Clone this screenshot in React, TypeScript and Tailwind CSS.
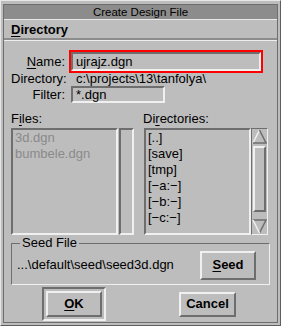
import React from 'react';

const font = { fontFamily: '"Liberation Sans", Arial, sans-serif' };

const Mn: React.FC<{ children: React.ReactNode }> = ({ children }) => (
    <span className="underline underline-offset-2 decoration-1">{children}</span>
);

const ListBox: React.FC<{ items: string[]; dim?: boolean; className?: string }> = ({ items, dim, className }) => (
    <div
        className={`border-2 border-t-[#6e6e6e] border-l-[#6e6e6e] border-r-[#f0f0f0] border-b-[#f0f0f0] pl-[2px] ${className ?? ''}`}
    >
        {items.map((it) => (
            <div key={it} className={`h-[16px] leading-[16px] text-[13px] ${dim ? 'text-[#8a8a8a]' : 'text-black'}`}>
                {it}
            </div>
        ))}
    </div>
);

const BevelButton: React.FC<{ children: React.ReactNode; className?: string }> = ({ children, className }) => (
    <button
        className={`flex items-center justify-center border-2 border-t-[#f0f0f0] border-l-[#f0f0f0] border-r-[#6e6e6e] border-b-[#6e6e6e] bg-[#bdbdbd] text-[13px] font-bold text-black ${className ?? ''}`}
    >
        {children}
    </button>
);

const Scrollbar: React.FC = () => (
    <div className="flex w-[17px] flex-col border border-t-[#6e6e6e] border-l-[#6e6e6e] border-r-[#f0f0f0] border-b-[#f0f0f0]">
        <svg width="15" height="16" viewBox="0 0 15 16" className="block">
            <path d="M1 14 L7.5 1" stroke="#f0f0f0" strokeWidth="1.5" fill="none" />
            <path d="M7.5 1 L14 14 L1 14" stroke="#6e6e6e" strokeWidth="1.5" fill="none" />
        </svg>
        <div className="mx-[1px] mt-[1px] h-[66px] border-2 border-t-[#f0f0f0] border-l-[#f0f0f0] border-r-[#6e6e6e] border-b-[#6e6e6e]" />
        <div className="flex-1" />
        <svg width="15" height="16" viewBox="0 0 15 16" className="block">
            <path d="M1 2 L14 2 L7.5 15" stroke="#6e6e6e" strokeWidth="1.5" fill="none" />
            <path d="M1 2 L7.5 15" stroke="#f0f0f0" strokeWidth="1.5" fill="none" />
        </svg>
    </div>
);

const App: React.FC = () => {
    return (
        <div
            style={font}
            className="h-[326px] w-[281px] border border-t-[#e8e8e8] border-l-[#e8e8e8] border-r-[#5e5e5e] border-b-[#5e5e5e] bg-[#bdbdbd] p-[2px] pt-[3px] text-black"
        >
            <div className="flex h-full flex-col border border-t-[#6e6e6e] border-l-[#6e6e6e] border-r-[#6e6e6e] border-b-[#6e6e6e]">
                <div className="flex h-[15px] items-center justify-center border-b border-b-[#e8e8e8] bg-[#8c8c8c] pt-[1px] text-[11.5px] leading-none">
                    Create Design File
                </div>
                <div className="flex h-[20px] items-center border-b-2 border-b-[#8c8c8c] px-[7px] pt-[2px] text-[13px] font-bold">
                    <Mn>D</Mn>irectory
                </div>
                <div className="flex flex-1 flex-col border-t border-t-[#eeeeee] px-[7px] pt-[10px] text-[13px]">
                    <div className="flex h-[21px] items-center">
                        <div className="w-[54px] text-right">
                            <Mn>N</Mn>ame:
                        </div>
                        <div className="ml-[5px] h-[21px] w-[192px] shrink-0 outline-2 outline-offset-[-1px] outline-[#ff0000]">
                            <div className="m-[1px] h-[19px] border-2 border-t-[#6e6e6e] border-l-[#6e6e6e] border-r-[#f0f0f0] border-b-[#f0f0f0] pl-[3px] leading-[15px]">
                                ujrajz.dgn
                            </div>
                        </div>
                    </div>
                    <div className="flex h-[14px] items-center">
                        <div className="w-[54px] text-right">Directory:</div>
                        <div className="ml-[11px]">c:\projects\13\tanfolya\</div>
                    </div>
                    <div className="flex h-[17px] items-center">
                        <div className="w-[54px] text-right">Filter:</div>
                        <div className="ml-[6px] h-[17px] w-[94px] border-2 border-t-[#6e6e6e] border-l-[#6e6e6e] border-r-[#f0f0f0] border-b-[#f0f0f0] pl-[3px] leading-[13px]">
                            *.dgn
                        </div>
                    </div>
                    <div className="mt-[7px] flex h-[18px] items-center">
                        <div className="w-[132px]">
                            F<Mn>i</Mn>les:
                        </div>
                        <div>
                            Di<Mn>r</Mn>ectories:
                        </div>
                    </div>
                    <div className="flex h-[107px]">
                        <ListBox items={['3d.dgn', 'bumbele.dgn']} dim className="w-[107px]" />
                        <div className="ml-[1px] w-[15px] border-2 border-t-[#6e6e6e] border-l-[#6e6e6e] border-r-[#f0f0f0] border-b-[#f0f0f0]" />
                        <ListBox
                            items={['[..]', '[save]', '[tmp]', '[\u2212a:\u2212]', '[\u2212b:\u2212]', '[\u2212c:\u2212]']}
                            className="ml-[10px] w-[107px]"
                        />
                        <Scrollbar />
                    </div>
                    <div className="relative mt-[8px] h-[42px] border border-t-[#6e6e6e] border-l-[#6e6e6e] border-r-[#f0f0f0] border-b-[#f0f0f0]">
                        <div className="absolute -top-[8px] left-[8px] bg-[#bdbdbd] px-[2px] leading-[14px]">Seed File</div>
                        <div className="flex h-full items-center justify-between pl-[5px] pr-[13px] pt-[2px]">
                            <div>...\default\seed\seed3d.dgn</div>
                            <BevelButton className="h-[29px] w-[56px]">
                                <Mn>S</Mn>eed
                            </BevelButton>
                        </div>
                    </div>
                    <div className="flex items-center pt-[2px]">
                        <div className="ml-[31px] border-2 border-t-[#6e6e6e] border-l-[#6e6e6e] border-r-[#f0f0f0] border-b-[#f0f0f0] p-[2px]">
                            <BevelButton className="h-[26px] w-[56px]">
                                <Mn>O</Mn>K
                            </BevelButton>
                        </div>
                        <BevelButton className="ml-[73px] h-[25px] w-[57px]">Cancel</BevelButton>
                    </div>
                </div>
            </div>
        </div>
    );
};

export default App;
